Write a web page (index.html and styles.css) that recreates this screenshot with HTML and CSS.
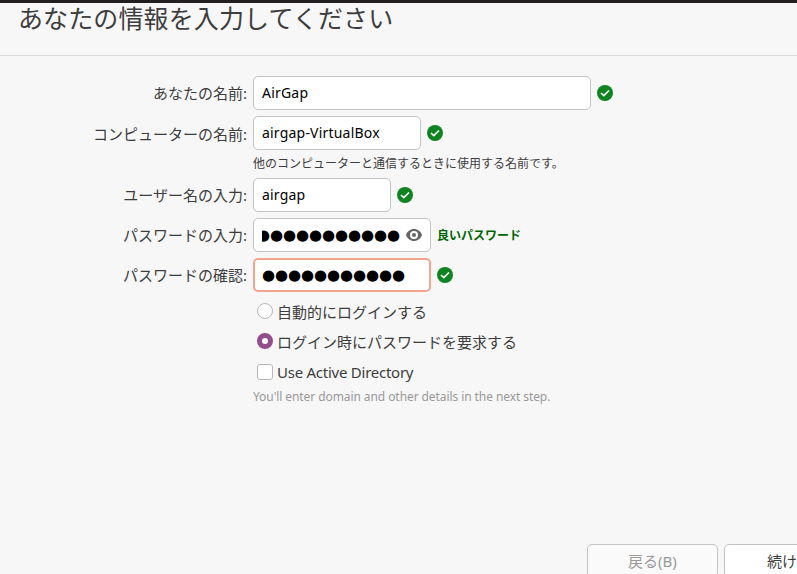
FILE: index.html
```html
<!DOCTYPE html>
<html lang="ja">
<head>
<meta charset="utf-8">
<title>インストール</title>
<link rel="stylesheet" href="styles.css">
</head>
<body>
<svg class="defs" width="0" height="0">
  <symbol id="ok" viewBox="0 0 16 16"><circle cx="8" cy="8" r="8" fill="#0e8420"/><path d="M4 8 6.800 10.600 12 5.500" fill="none" stroke="#fff" stroke-width="1.7"/></symbol>
</svg>
<header class="header"><h1 class="title">あなたの情報を入力してください</h1></header>
<main class="form">
  <div class="row">
    <span class="label">あなたの名前:</span>
    <div class="field w-name"><span class="wide">AirGap</span></div>
    <svg class="ok"><use href="#ok"/></svg>
  </div>
  <div class="row">
    <span class="label low">コンピューターの名前:</span>
    <div class="field w-host"><span class="wide">airgap-VirtualBox</span></div>
    <svg class="ok"><use href="#ok"/></svg>
  </div>
  <p class="note">他のコンピューターと通信するときに使用する名前です。</p>
  <div class="row">
    <span class="label">ユーザー名の入力:</span>
    <div class="field w-user"><span class="wide">airgap</span></div>
    <svg class="ok"><use href="#ok"/></svg>
  </div>
  <div class="row">
    <span class="label">パスワードの入力:</span>
    <div class="field w-pass">
      <span class="clip"><span class="dots scrolled">●●●●●●●●●●●</span></span>
      <svg class="eye" viewBox="0 0 16 12"><path d="M8 0C4.2 0 1.2 2.5 0 6c1.2 3.5 4.2 6 8 6s6.800-2.500 8-6C14.800 2.500 11.800 0 8 0Zm0 2a4 4 0 1 1 0 8 4 4 0 0 1 0-8Z" fill="#666" fill-rule="evenodd"/><circle cx="8" cy="6" r="2" fill="#666"/></svg>
    </div>
    <span class="strength">良いパスワード</span>
  </div>
  <div class="row">
    <span class="label">パスワードの確認:</span>
    <div class="field w-pass focus"><span class="dots">●●●●●●●●●●●</span></div>
    <svg class="ok"><use href="#ok"/></svg>
  </div>
  <div class="options">
    <div class="option"><span class="radio"></span><span class="low">自動的にログインする</span></div>
    <div class="option"><span class="radio on"></span><span class="low">ログイン時にパスワードを要求する</span></div>
    <div class="option last"><span class="check"></span><span class="narrow">Use Active Directory</span></div>
  </div>
  <p class="hint">You'll enter domain and other details in the next step.</p>
</main>
<footer class="footer">
  <div class="button disabled">戻る(B)</div>
  <div class="button">続ける</div>
</footer>
</body>
</html>
```
FILE: styles.css
```css
* { box-sizing: border-box; }
body {
  margin: 0;
  width: 797px;
  height: 574px;
  overflow: hidden;
  display: flex;
  flex-direction: column;
  background: #f7f7f7;
  color: #3d3d3d;
  font: 15px/20px "Noto Sans", "Noto Sans CJK JP", sans-serif;
}
.defs { position: absolute; }
.header {
  flex: none;
  height: 56px;
  border-top: 3px solid #231f20;
  border-bottom: 1px solid #dcdcdc;
  padding-left: 18px;
}
.title {
  margin: 0;
  font-size: 25px;
  line-height: 30px;
  letter-spacing: 0.12px;
  font-weight: 400;
  white-space: nowrap;
}
.form { flex: 1; padding-top: 20px; }
.row { display: flex; align-items: center; height: 34px; margin-bottom: 6px; }
.label { width: 247px; margin-right: 6px; text-align: right; white-space: nowrap; }
.low { padding-top: 2px; }
.field {
  display: flex;
  align-items: center;
  height: 34px;
  padding: 0 8px;
  border: 1px solid #c3c3c3;
  border-radius: 5px;
  background: #fff;
  color: #000;
  white-space: nowrap;
  font-size: 14px;
}
.wide { letter-spacing: 0.2px; }
.narrow { letter-spacing: -0.25px; }
.focus { border: 2px solid #f2a58c; padding: 0 7px; }
.w-name { width: 338px; }
.w-host { width: 168px; }
.w-user { width: 138px; }
.w-pass { width: 178px; }
.ok { width: 16px; height: 16px; margin-left: 6px; }
.note { margin: 0 0 0 253px; height: 22px; font-size: 12px; line-height: 16px; }
.clip { display: flex; width: 144px; overflow: hidden; }
.dots { font: 15px/24px "DejaVu Sans", sans-serif; letter-spacing: -0.1px; }
.scrolled { margin-left: -5px; }
.eye { flex: none; width: 16px; height: 12px; }
.strength { margin-left: 6px; padding-top: 1px; font-size: 12px; font-weight: 700; color: #006400; }
.options { margin-top: -2px; padding-left: 257px; }
.option { display: flex; align-items: center; gap: 4px; height: 30px; white-space: nowrap; }
.last { height: 32px; }
.radio, .check { width: 16px; height: 16px; border: 1px solid #b8b8b8; background: #fff; border-radius: 50%; }
.check { border-radius: 3px; }
.on { border: 5.5px solid #924d8b; }
.hint { margin: 0 0 0 253px; font-size: 12px; line-height: 18px; letter-spacing: -0.08px; color: #999; white-space: nowrap; }
.footer { flex: none; display: flex; gap: 6px; height: 30px; padding-left: 587px; }
.button {
  flex: none;
  width: 131px;
  height: 34px;
  border: 1px solid #c3c3c3;
  border-radius: 5px;
  background: #fff;
  text-align: center;
  line-height: 33px;
}
.disabled { background: #fafafa; color: #999; }
```
